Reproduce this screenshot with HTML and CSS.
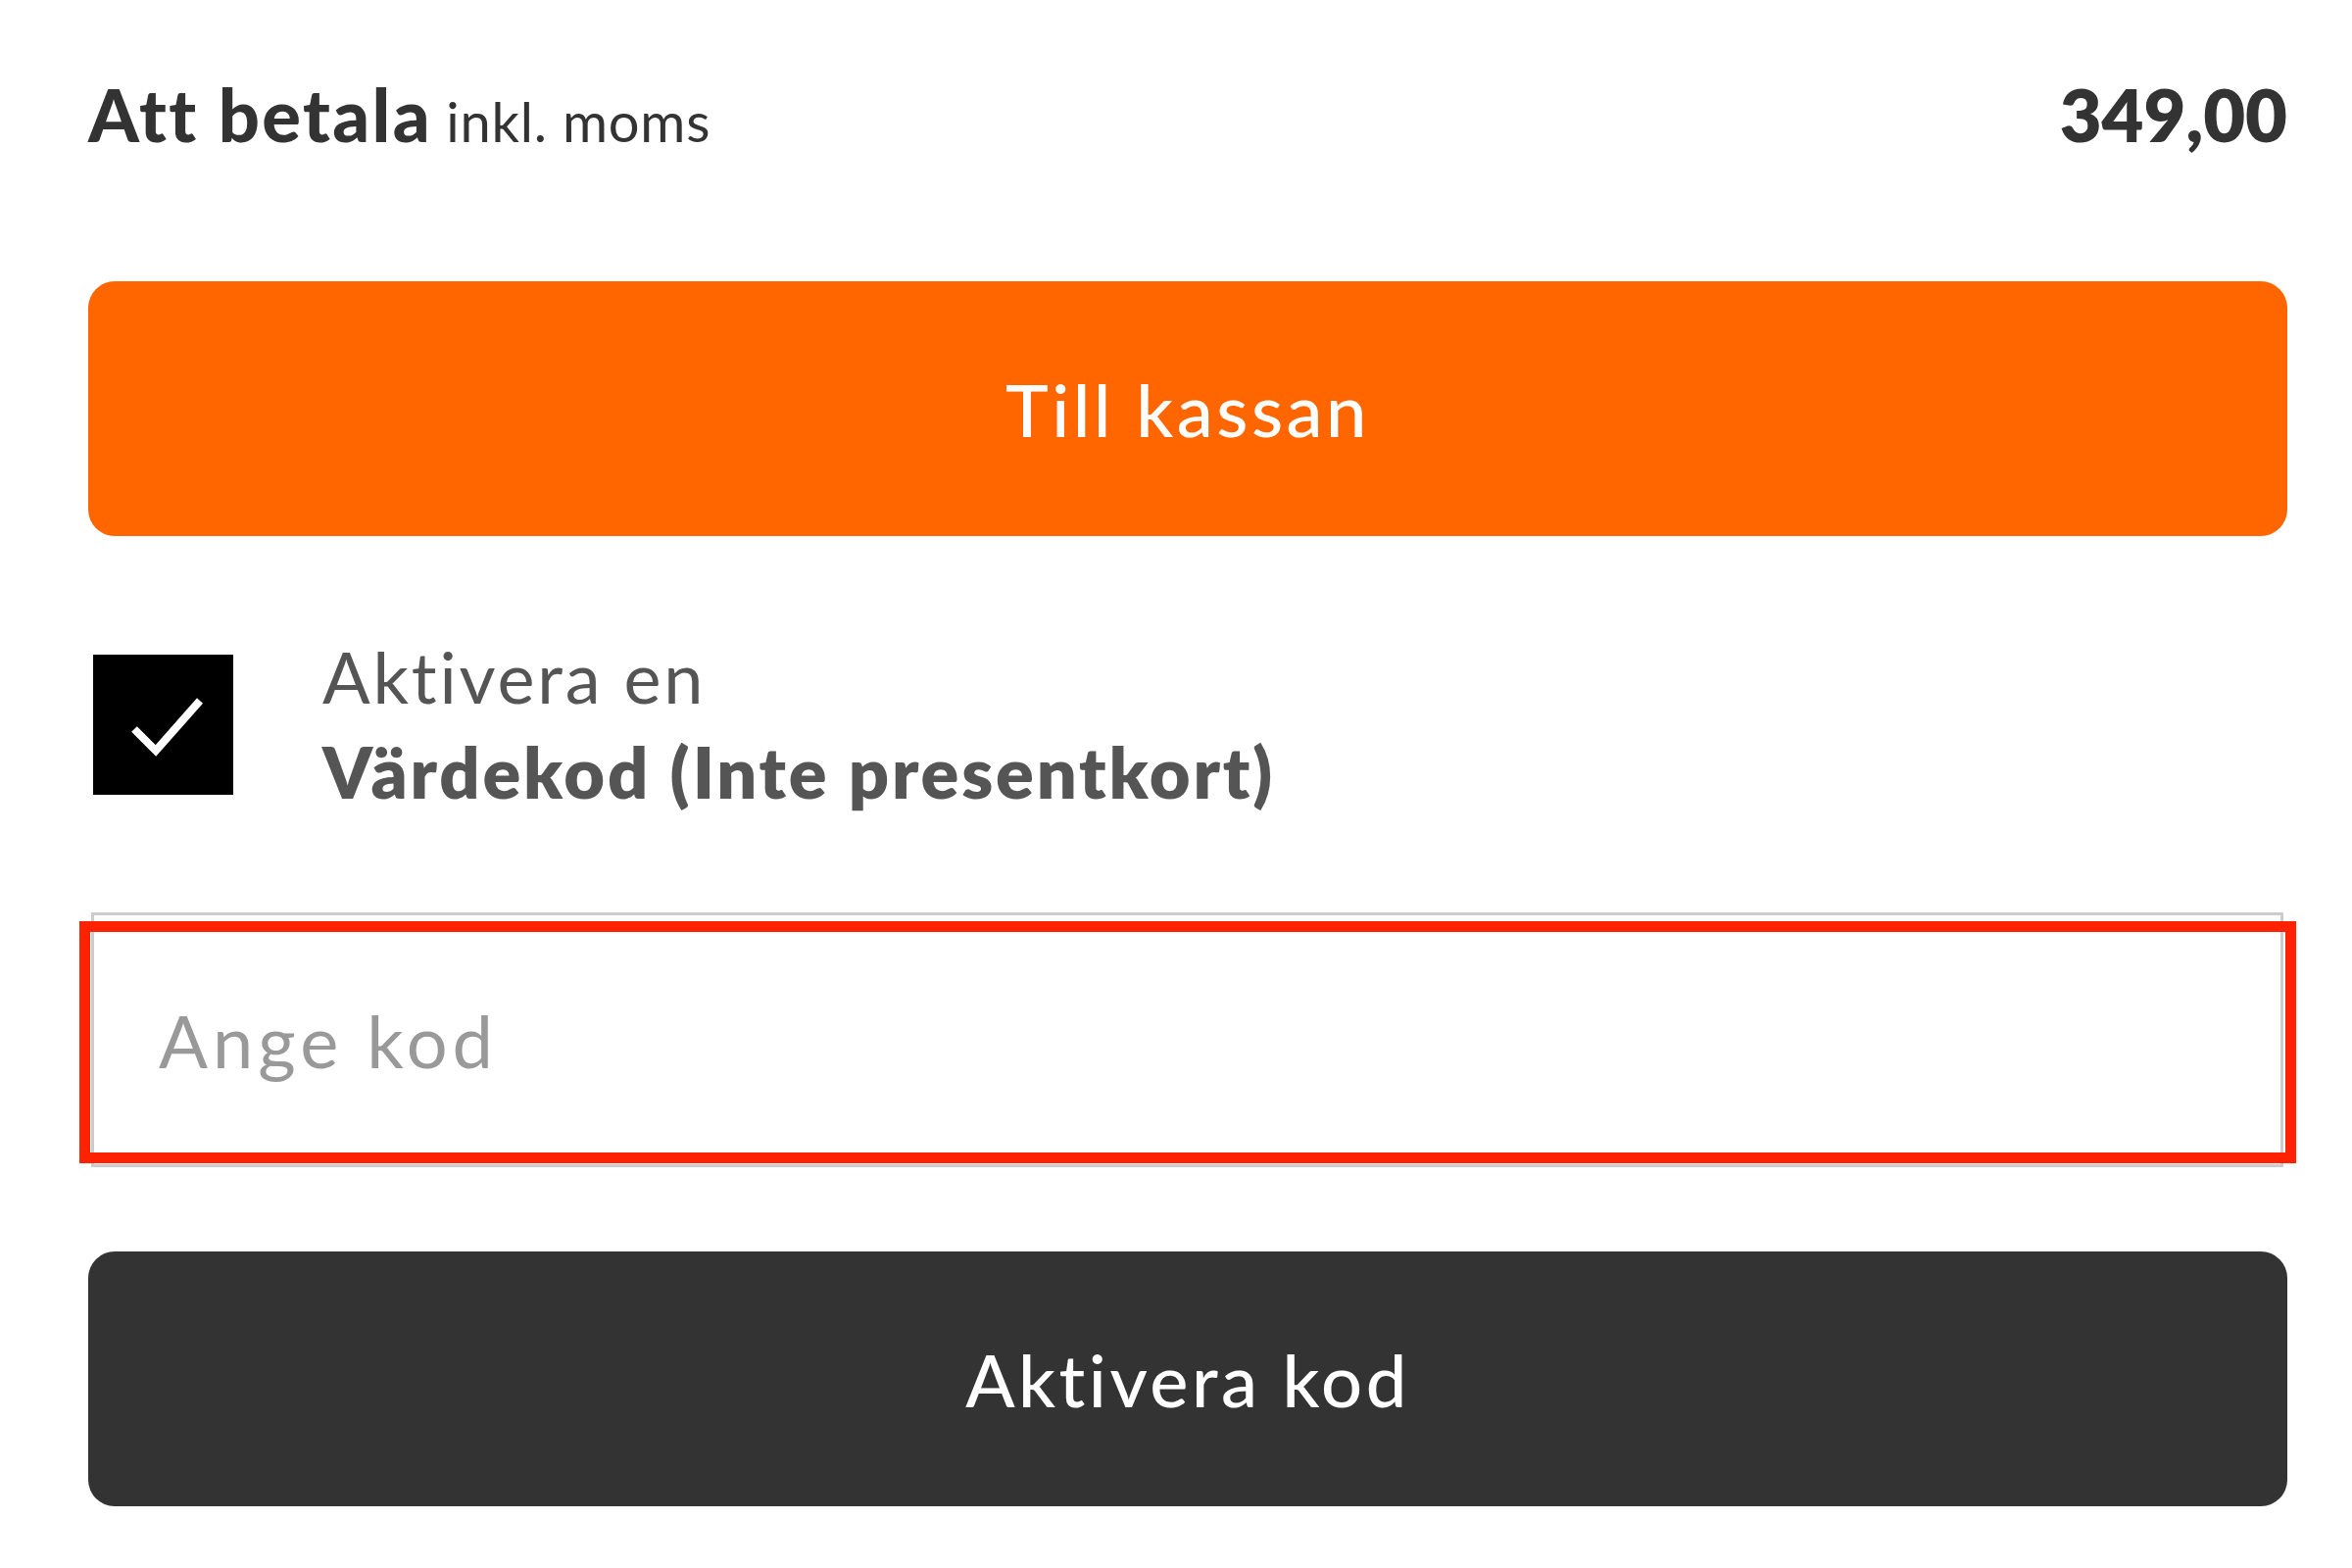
FILE: index.html
```html
<!DOCTYPE html>
<html lang="sv">
<head>
<meta charset="utf-8">
<title>Att betala</title>
<link rel="stylesheet" href="styles.css">
</head>
<body>
<main class="summary">
  <div class="total-row">
    <div class="total-label"><span class="total-strong">Att betala</span> <span class="total-note">inkl. moms</span></div>
    <div class="total-amount">349,00</div>
  </div>
  <button class="btn btn-primary" type="button">Till kassan</button>
  <label class="option-row">
    <span class="checkbox">
      <svg class="check-icon" viewBox="0 0 143 143" width="143" height="143" aria-hidden="true">
        <polyline points="42,76 64,98 109,47" fill="none" stroke="#fff" stroke-width="8" stroke-linecap="butt" stroke-linejoin="miter"/>
      </svg>
    </span>
    <span class="option-text">
      <span class="option-line">Aktivera en</span>
      <span class="option-line option-bold">Värdekod (Inte presentkort)</span>
    </span>
  </label>
  <div class="code-field">
    <input class="code-input" type="text" placeholder="Ange kod">
    <span class="highlight"></span>
  </div>
  <button class="btn btn-dark" type="button">Aktivera kod</button>
</main>
</body>
</html>
```

FILE: styles.css
```css
html, body {
  margin: 0;
  padding: 0;
  background: #ffffff;
}

body {
  font-family: "Lato", "Open Sans", sans-serif;
  font-variant-ligatures: none;
  color: #333333;
}

.summary {
  display: flex;
  flex-direction: column;
  padding: 67px 66px 0 90px;
}

.total-row {
  display: flex;
  justify-content: space-between;
  align-items: baseline;
  height: 100px;
  line-height: 100px;
}

.total-label {
  white-space: nowrap;
}

.total-strong {
  font-size: 74px;
  font-weight: 900;
  letter-spacing: 2.4px;
  color: #333333;
}

.total-note {
  margin-left: 10px;
  font-size: 56px;
  font-weight: 400;
  letter-spacing: 0.8px;
  color: #333333;
}

.total-amount {
  font-size: 74px;
  font-weight: 800;
  color: #333333;
}

.btn {
  display: flex;
  align-items: center;
  justify-content: center;
  height: 260px;
  border: none;
  border-radius: 27px;
  font-family: "Lato", "Open Sans", sans-serif;
  font-variant-ligatures: none;
  font-size: 74px;
  font-weight: 500;
  letter-spacing: 3.5px;
  color: #ffffff;
  padding: 0;
  width: 100%;
}

.btn-primary {
  margin-top: 120px;
  background: #ff6600;
}

.option-row {
  display: flex;
  align-items: center;
  margin-top: 95px;
}

.checkbox {
  flex: none;
  display: block;
  width: 143px;
  height: 143px;
  margin-left: 5px;
  background: #000000;
}

.check-icon {
  display: block;
}

.option-text {
  display: flex;
  flex-direction: column;
  margin-left: 91px;
  color: #555555;
  font-size: 72px;
  line-height: 97px;
  letter-spacing: 2.8px;
}

.option-bold {
  font-weight: 800;
}

.code-field {
  position: relative;
  margin: 95px 4px 0 3px;
}

.code-input {
  display: block;
  box-sizing: border-box;
  width: 100%;
  height: 260px;
  border: 3px solid #cccccc;
  padding: 0 0 0 66px;
  font-family: "Lato", "Open Sans", sans-serif;
  font-size: 74px;
  letter-spacing: 5px;
  color: #333333;
  background: #ffffff;
  outline: none;
}

.code-input::placeholder {
  color: #999999;
}

.highlight {
  position: absolute;
  left: -12px;
  right: -13px;
  top: 9px;
  bottom: 4px;
  border: 11px solid #ff2200;
  pointer-events: none;
}

.btn-dark {
  margin-top: 86px;
  background: #333333;
}
```
